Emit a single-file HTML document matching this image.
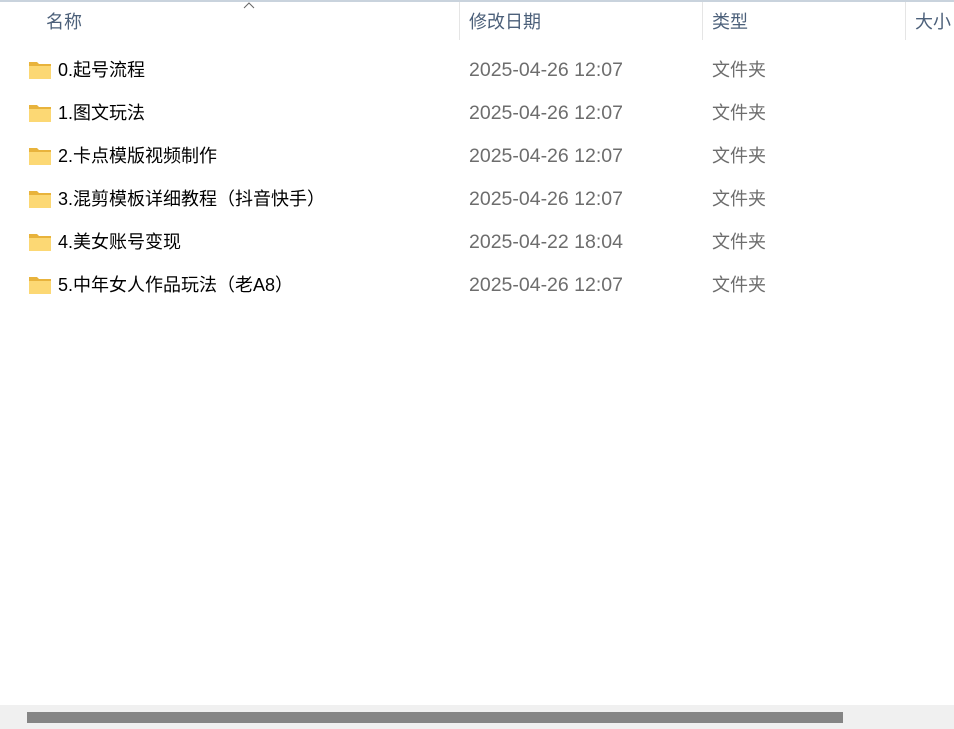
<!DOCTYPE html>
<html><head><meta charset="utf-8"><style>
body{margin:0;width:954px;height:729px;background:#fff;position:relative;overflow:hidden;font-family:"Liberation Sans","Noto Sans CJK SC",sans-serif;}
.top{position:absolute;left:0;top:0;width:954px;height:2px;background:#c9d3dd}
.h{position:absolute;top:11px;font-size:18px;color:#4c607a;line-height:22px}
.sep{position:absolute;top:2px;height:38px;width:1px;background:#e5e5e5}
.r{position:absolute;left:0;height:24px;font-size:18px;line-height:24px;width:954px}
.r .n{position:absolute;left:58px;color:#000}
.r .d{position:absolute;left:469px;color:#6d6d6d;font-size:19.5px}
.r .t{position:absolute;left:712px;color:#6d6d6d}
.f{position:absolute;left:29px;top:3px}
.track{position:absolute;left:0;top:705px;width:954px;height:24px;background:#f0f0f0}
.thumb{position:absolute;left:27px;top:712px;width:816px;height:11px;background:#858585}
</style></head><body>
<div class="top"></div>
<svg style="position:absolute;left:243px;top:2px" width="12" height="7"><path d="M1 6L6 1L11 6" fill="none" stroke="#666" stroke-width="1"/></svg>
<div class="h" style="left:46px">名称</div>
<div class="sep" style="left:459px"></div>
<div class="h" style="left:469px">修改日期</div>
<div class="sep" style="left:702px"></div>
<div class="h" style="left:712px">类型</div>
<div class="sep" style="left:905px"></div>
<div class="h" style="left:915px">大小</div>

<div class="r" style="top:58px"><svg class="f" width="22" height="18"><path d="M0 1h8l2 2h12v15H0z" fill="#e8b33c"/><path d="M0 5h22v13H0z" fill="#fcd874"/></svg><span class="n">0.起号流程</span><span class="d">2025-04-26 12:07</span><span class="t">文件夹</span></div>
<div class="r" style="top:101px"><svg class="f" width="22" height="18"><path d="M0 1h8l2 2h12v15H0z" fill="#e8b33c"/><path d="M0 5h22v13H0z" fill="#fcd874"/></svg><span class="n">1.图文玩法</span><span class="d">2025-04-26 12:07</span><span class="t">文件夹</span></div>
<div class="r" style="top:144px"><svg class="f" width="22" height="18"><path d="M0 1h8l2 2h12v15H0z" fill="#e8b33c"/><path d="M0 5h22v13H0z" fill="#fcd874"/></svg><span class="n">2.卡点模版视频制作</span><span class="d">2025-04-26 12:07</span><span class="t">文件夹</span></div>
<div class="r" style="top:187px"><svg class="f" width="22" height="18"><path d="M0 1h8l2 2h12v15H0z" fill="#e8b33c"/><path d="M0 5h22v13H0z" fill="#fcd874"/></svg><span class="n">3.混剪模板详细教程（抖音快手）</span><span class="d">2025-04-26 12:07</span><span class="t">文件夹</span></div>
<div class="r" style="top:230px"><svg class="f" width="22" height="18"><path d="M0 1h8l2 2h12v15H0z" fill="#e8b33c"/><path d="M0 5h22v13H0z" fill="#fcd874"/></svg><span class="n">4.美女账号变现</span><span class="d">2025-04-22 18:04</span><span class="t">文件夹</span></div>
<div class="r" style="top:273px"><svg class="f" width="22" height="18"><path d="M0 1h8l2 2h12v15H0z" fill="#e8b33c"/><path d="M0 5h22v13H0z" fill="#fcd874"/></svg><span class="n">5.中年女人作品玩法（老A8）</span><span class="d">2025-04-26 12:07</span><span class="t">文件夹</span></div>

<div class="track"></div><div class="thumb"></div>
</body></html>
